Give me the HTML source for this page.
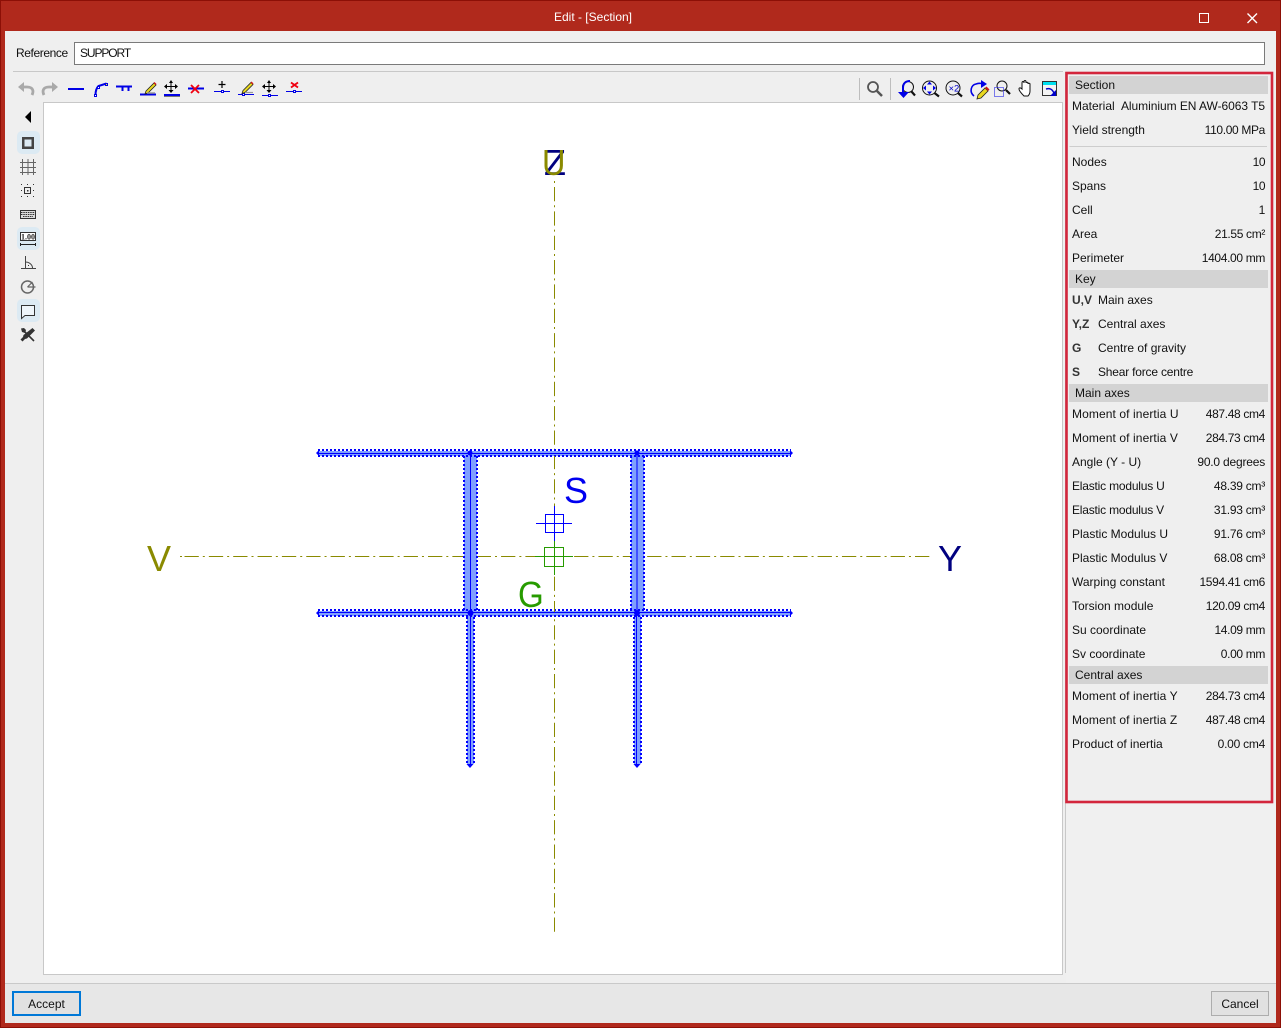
<!DOCTYPE html>
<html><head><meta charset="utf-8"><title>Edit - [Section]</title>
<style>
html,body{margin:0;padding:0;width:1281px;height:1028px;overflow:hidden;background:#b0291c}
body{position:relative;font:12px "Liberation Sans",sans-serif;color:#111}
.a{position:absolute}
.t{position:absolute;white-space:nowrap;line-height:16px;height:16px}
.r{position:absolute;white-space:nowrap;line-height:16px;height:16px;right:16px;text-align:right;letter-spacing:-.35px}
.h{position:absolute;left:1069px;width:199px;height:18px;margin-top:-1px;background:#d3d3d3;line-height:18px;text-indent:6px}
.btn{position:absolute;box-sizing:border-box;text-align:center;background:#e1e1e1}
svg{position:absolute;left:0;top:0;overflow:visible}
</style></head><body>
<div class="a" style="left:0;top:0;width:1279px;height:1026px;border:1px solid #8c0f06"></div>
<div class="t" style="left:0;width:1186px;top:9px;text-align:center;color:#fff">Edit - [Section]</div>
<div class="a" style="left:5px;top:31px;width:1271px;height:992px;background:#efefef"></div>
<div class="a" style="left:1066px;top:803px;width:210px;height:180px;background:#f0f0f0"></div>
<div class="a" style="left:5px;top:983px;width:1271px;height:40px;background:#e7e7e7;border-top:1px solid #c9c9c9;box-sizing:border-box"></div>
<div class="t" style="left:16px;top:45px;letter-spacing:-.4px">Reference</div>
<div class="a" style="left:74px;top:42px;width:1191px;height:23px;box-sizing:border-box;background:#fff;border:1px solid #7a7a7a"></div>
<div class="t" style="left:80px;top:45px;letter-spacing:-1.1px">SUPPORT</div>
<div class="a" style="left:13px;top:71px;width:1050px;height:1px;background:#c8c8c8"></div>
<div class="a" style="left:43px;top:102px;width:1020px;height:873px;box-sizing:border-box;background:#fff;border:1px solid #c8c8c8"></div>
<div class="a" style="left:1065px;top:72px;width:1px;height:901px;background:#c8c8c8"></div>
<div class="a" style="left:16.500px;top:131px;width:23px;height:23px;border-radius:5px;background:#dceaf3"></div>
<div class="a" style="left:16.500px;top:227px;width:23px;height:23px;border-radius:5px;background:#dceaf3"></div>
<div class="a" style="left:16.500px;top:299px;width:23px;height:23px;border-radius:5px;background:#dceaf3"></div>

<svg width="1281" height="1028" viewBox="0 0 1281 1028">
<g fill="none" stroke="#fff" stroke-width="1.400"><rect x="1199.500" y="13.500" width="9" height="9" stroke-width="1"/><path d="M1247.500 13.500l9.500 9.500M1257 13.500l-9.500 9.500"/></g>

<!-- axes -->
<g fill="none" stroke="#8a8a00" stroke-width="1" stroke-dasharray="14.300 4 2 4.050">
<path d="M554.500 187V932"/><path d="M184.500 556.500H932"/>
</g>
<path d="M554.500 181v2M180 556.500h2" stroke="#8a8a00"/>

<!-- drawing -->
<g fill="#7f9fff">
<rect x="464" y="451" width="13" height="161"/><rect x="631" y="451" width="13" height="161"/>
<rect x="318" y="451" width="473" height="5"/><rect x="318" y="611" width="473" height="5"/>
<rect x="467" y="614" width="7" height="150"/><rect x="634" y="614" width="7" height="150"/>
</g>
<g fill="none" stroke="#0000ff" stroke-width="1">
<path d="M318 453.500H791M318 612.500H791M470.500 453V764M637 453V612M636.500 612V764"/>
</g>
<g fill="none" stroke="#0000ff" stroke-width="2" stroke-dasharray="2 2">
<path d="M318 450H791M318 456H791M318 610H791M318 616H791"/>
<path d="M464 456V610M477 456V610M631 456V610M644 456V610"/>
<path d="M467 617V764M474 617V764M634 617V764M641 617V764"/>
</g>
<g fill="#0000ff">
<path d="M316 453l3-3v6zM793 453l-3-3v6zM316 613l3-3v6zM793 613l-3-3v6z"/>
<path d="M470 768l-3.500-4h7zM637 768l-3.500-4h7z"/>
<circle cx="470" cy="453" r="2.500"/><circle cx="637" cy="453" r="2.500"/><circle cx="470.500" cy="613" r="3"/><circle cx="637" cy="613" r="3"/>
</g>
<path d="M554.500 456v5M554.500 607v5" stroke="#8a8a00"/>
<g fill="none" stroke="#0000ff" stroke-width="1"><rect x="545.500" y="514.500" width="18" height="18"/><path d="M536 523.500h36M554.500 506v35"/></g>
<g fill="none" stroke="#279b00" stroke-width="1"><rect x="544.500" y="547.500" width="19" height="19"/><path d="M535 556.500h38M554.500 541v34"/></g>
<g font-family="Liberation Sans" font-size="36">
<text x="564" y="503" fill="#0000f0">S</text>
<text transform="translate(518 607) scale(.92 1)" fill="#279b00">G</text>
<text x="147" y="571" fill="#8a8a00">V</text>
<text x="938" y="571" fill="#000080">Y</text>
<text x="544" y="175" fill="#000080">Z</text>
<text transform="translate(542 175) scale(.9 1)" fill="#8a8a00">U</text>
</g>

<!-- top toolbar -->
<g fill="none" stroke="#a9a9a9" stroke-width="2.800"><path d="M22 87h5c6 0 7 4 5 8"/><path d="M54 87h-5c-6 0-7 4-5 8"/></g>
<g fill="#a9a9a9"><path d="M18 87l6-5v10zM58 87l-6-5v10z"/></g>
<g fill="none" stroke="#0000e6">
<path d="M68 89h16" stroke-width="2"/>
<path d="M95.500 95c0-5 2-8 3-9l8-2.500" stroke-width="2"/>
<path d="M116 86.500h16" stroke-width="2"/><path d="M122.500 87v4M128.500 87v4" stroke-width="2"/>
<path d="M140 94.500h16" stroke-width="2"/>
<path d="M164 95h16" stroke-width="2"/>
<path d="M188 88.500h16" stroke-width="2"/>
<path d="M214 91.500h16M238 94.500h16M262 95.500h16M286 91.500h16" stroke-width="1"/>
</g>
<path d="M164 96.500h16" stroke="#777" stroke-width="1"/>
<g fill="#fff" stroke="#0000e6" stroke-width="1"><rect x="94.500" y="94.500" width="2" height="2"/><rect x="97.500" y="86.500" width="2" height="2"/><rect x="105.500" y="83.500" width="2" height="2" fill="#ff0"/><rect x="221.500" y="90.500" width="2" height="2"/><rect x="242.500" y="93.500" width="2" height="2"/><rect x="268.500" y="94.500" width="2" height="2"/><rect x="293.500" y="90.500" width="2" height="2"/></g>
<path d="M146 91l8-8 2 2-8 8-3 1z" fill="#e8d820" stroke="#222" stroke-width=".8"/><path d="M153.500 83l1-1 2 2-1 1z" fill="#d01818"/><path d="M147 93h8" stroke="#999" stroke-width="1.500"/>
<path d="M243 90.500l8-8 2 2-8 8-3 1z" fill="#e8d820" stroke="#222" stroke-width=".8"/><path d="M250.500 82.500l1-1 2 2-1 1z" fill="#d01818"/><path d="M245 92.500h8" stroke="#999" stroke-width="1.200"/>
<g fill="none" stroke="#000" stroke-width="1"><path d="M171 83v8M166 86.500h10M269 83v8M264 86.500h10"/></g>
<g fill="#000"><path d="M171 80l-2 3h4zM171 93l-2.500-3h5zM164 86.500l3-2.500v5zM178 86.500l-3-2.500v5zM269 80l-2 3h4zM269 93l-2.500-3h5zM262 86.500l3-2.500v5zM276 86.500l-3-2.500v5z"/></g>
<path d="M191 85l8 8M199 85l-8 8M291 82.500l7 5M298 82.500l-7 5" stroke="#f00010" stroke-width="1.800" fill="none"/>
<path d="M222 81v7M218.500 84.500h7" stroke="#000" stroke-width="1.200"/>

<!-- right toolbar -->
<path d="M859.500 78v22M890.500 78v22" stroke="#bdbdbd"/>
<g fill="none" stroke="#555"><circle cx="873" cy="87" r="5" stroke-width="1.800"/><path d="M877 91l5 5" stroke-width="2.500"/></g>
<g fill="none" stroke="#111"><circle cx="908" cy="87" r="5.500" stroke-width="1"/><path d="M911.500 91.500l3.500 4" stroke-width="2.200"/>
<circle cx="929.500" cy="88" r="7" stroke-width="1"/><path d="M934.500 93l4.500 3.500" stroke-width="2.200"/>
<circle cx="953" cy="88" r="7" stroke-width="1"/><path d="M958 93l4 3.500" stroke-width="2.200"/>
<circle cx="1002" cy="86" r="5" stroke-width="1"/><path d="M1006 90l4 4" stroke-width="2.200"/></g>
<path d="M903 95V88c0-5 3-7 7-7" fill="none" stroke="#0000e6" stroke-width="2"/><path d="M898 92h11l-5.500 6z" fill="#0000e6"/>
<g fill="#0000e6"><path d="M929.500 81.500l-2.500 3h5zM929.500 94.500l-2.500-3h5zM923 88l3-2.500v5zM936 88l-3-2.500v5z"/></g>
<text x="948.500" y="91.500" font-family="Liberation Sans" font-size="9.500" fill="#0000c8">×2</text>
<path d="M974 96c-5-4-3-11 2-12 3-1 5-1 7 0" fill="none" stroke="#0000e6" stroke-width="1.600"/><path d="M981 80l6 4-6 4z" fill="#0000e6"/>
<path d="M978 95l7-7 3 3-7 7-4 1z" fill="#e8d820" stroke="#222" stroke-width=".8"/><path d="M985 88l1.500-1.500 3 3L988 91z" fill="#d01818"/>
<rect x="994.500" y="87.500" width="9" height="9" fill="none" stroke="#0000e6" stroke-dasharray="1 1"/>
<path d="M1024 96c-2-2-5-5-5-7s2-1 3 0v-6c0-2 2-2 2 0v-1c0-2 2-2 2 0v1c0-1 2-1 2 0v1c0-1 2-1 2 0v7c0 2-1 4-2 5z" fill="#fff" stroke="#111" stroke-width="1"/>
<rect x="1042.500" y="81.500" width="14" height="14" fill="#f4f4f4" stroke="#333"/><rect x="1043" y="82" width="13" height="3" fill="#00e0f0"/>
<path d="M1046 89c4-1 6 0 8 4" fill="none" stroke="#0000c8" stroke-width="1.500"/><path d="M1056 90v6h-6z" fill="#0000c8"/>

<!-- left toolbar -->
<path d="M25 117l6-6v12z" fill="#000"/>
<rect x="23.250" y="138.250" width="9.500" height="9.500" fill="none" stroke="#444" stroke-width="2.500"/>
<g fill="none" stroke="#666"><path d="M22.500 159v16M28 159v16M33.500 159v16M20 162.500h16M20 167.500h16M20 172.500h16"/></g>
<g fill="#333"><rect x="24.500" y="187.500" width="6" height="6" fill="none" stroke="#333"/><rect x="27" y="190" width="1.500" height="1.500"/><rect x="21" y="184" width="1" height="1"/><rect x="27" y="184" width="1" height="1"/><rect x="33" y="184" width="1" height="1"/><rect x="21" y="190" width="1" height="1"/><rect x="33" y="190" width="1" height="1"/><rect x="21" y="196" width="1" height="1"/><rect x="27" y="196" width="1" height="1"/><rect x="33" y="196" width="1" height="1"/></g>
<rect x="20.500" y="210.500" width="15" height="8" fill="#ddd" stroke="#333"/><path d="M21 212.500h14M21 214.500h14M23 216.500h10" stroke="#333" stroke-dasharray="1.500 .8"/>
<rect x="20.500" y="232.500" width="15" height="8" fill="#fff" stroke="#333"/><text x="28" y="239.500" text-anchor="middle" font-family="Liberation Serif" font-size="8" font-weight="bold" fill="#222">1.00</text>
<path d="M20.500 243v3M35.500 243v3M21 244.500h14" stroke="#222" fill="none"/>
<path d="M21 268.500h15M25.500 256v12M25.500 262c4 0 7 3 7 6" stroke="#444" fill="none"/><rect x="28" y="265" width="1" height="1" fill="#333"/>
<g fill="none" stroke="#666"><circle cx="27.500" cy="287" r="6" stroke-width="1.500"/><path d="M27.500 287h8M27.500 287l5-5" stroke-width="1.200"/></g>
<path d="M21.500 305.500h13v10H25l-3.500 3z" fill="#eef5fa" stroke="#333"/>
<g stroke="#333" stroke-width="1.600" fill="none"><path d="M22 329l12 12"/></g><path d="M32.500 328l2.500 2.500-8 8-2 .5-2.500 2.500-2-2 2.500-2.500.5-2z" fill="#333"/><path d="M21 328.500l3-.5 2 2-1 3-3-1z" fill="#333"/>

<!-- highlight -->
<rect x="1066.500" y="73" width="205.500" height="729" fill="none" stroke="#d3263c" stroke-width="2.600"/>
<path d="M1069.500 146.500H1267" stroke="#cdcdcd"/>
</svg>

<div class="a" style="left:0;top:1px;width:1281px;height:800px">
<div class="h" style="top:76px">Section</div>
<div class="t" style="left:1072px;top:97px">Material</div><div class="r" style="top:97px;letter-spacing:-.05px">Aluminium EN AW-6063 T5</div>
<div class="t" style="left:1072px;top:121px">Yield strength</div><div class="r" style="top:121px">110.00 MPa</div>
<div class="t" style="left:1072px;top:153px">Nodes</div><div class="r" style="top:153px;letter-spacing:-.5px">10</div>
<div class="t" style="left:1072px;top:177px">Spans</div><div class="r" style="top:177px;letter-spacing:-.5px">10</div>
<div class="t" style="left:1072px;top:201px">Cell</div><div class="r" style="top:201px">1</div>
<div class="t" style="left:1072px;top:225px">Area</div><div class="r" style="top:225px">21.55 cm²</div>
<div class="t" style="left:1072px;top:249px">Perimeter</div><div class="r" style="top:249px">1404.00 mm</div>
<div class="h" style="top:270px">Key</div>
<div class="t" style="left:1072px;top:291px;font-weight:bold;color:#333">U,V</div><div class="t" style="left:1098px;top:291px">Main axes</div>
<div class="t" style="left:1072px;top:315px;font-weight:bold;color:#333">Y,Z</div><div class="t" style="left:1098px;top:315px">Central axes</div>
<div class="t" style="left:1072px;top:339px;font-weight:bold;color:#333">G</div><div class="t" style="left:1098px;top:339px">Centre of gravity</div>
<div class="t" style="left:1072px;top:363px;font-weight:bold;color:#333">S</div><div class="t" style="left:1098px;top:363px;letter-spacing:-.2px">Shear force centre</div>
<div class="h" style="top:384px">Main axes</div>
<div class="t" style="left:1072px;top:405px;letter-spacing:.1px">Moment of inertia U</div><div class="r" style="top:405px">487.48 cm4</div>
<div class="t" style="left:1072px;top:429px;letter-spacing:.1px">Moment of inertia V</div><div class="r" style="top:429px">284.73 cm4</div>
<div class="t" style="left:1072px;top:453px">Angle (Y - U)</div><div class="r" style="top:453px;letter-spacing:-.2px">90.0 degrees</div>
<div class="t" style="left:1072px;top:477px;letter-spacing:-.2px">Elastic modulus U</div><div class="r" style="top:477px;letter-spacing:-.25px">48.39 cm³</div>
<div class="t" style="left:1072px;top:501px;letter-spacing:-.2px">Elastic modulus V</div><div class="r" style="top:501px;letter-spacing:-.25px">31.93 cm³</div>
<div class="t" style="left:1072px;top:525px">Plastic Modulus U</div><div class="r" style="top:525px;letter-spacing:-.25px">91.76 cm³</div>
<div class="t" style="left:1072px;top:549px">Plastic Modulus V</div><div class="r" style="top:549px;letter-spacing:-.25px">68.08 cm³</div>
<div class="t" style="left:1072px;top:573px">Warping constant</div><div class="r" style="top:573px">1594.41 cm6</div>
<div class="t" style="left:1072px;top:597px">Torsion module</div><div class="r" style="top:597px">120.09 cm4</div>
<div class="t" style="left:1072px;top:621px">Su coordinate</div><div class="r" style="top:621px">14.09 mm</div>
<div class="t" style="left:1072px;top:645px">Sv coordinate</div><div class="r" style="top:645px">0.00 mm</div>
<div class="h" style="top:666px">Central axes</div>
<div class="t" style="left:1072px;top:687px;letter-spacing:.1px">Moment of inertia Y</div><div class="r" style="top:687px">284.73 cm4</div>
<div class="t" style="left:1072px;top:711px;letter-spacing:.1px">Moment of inertia Z</div><div class="r" style="top:711px">487.48 cm4</div>
<div class="t" style="left:1072px;top:735px">Product of inertia</div><div class="r" style="top:735px;letter-spacing:-.25px">0.00 cm4</div>
</div>

<div class="btn" style="left:12px;top:991px;width:69px;height:25px;border:2px solid #0078d7;line-height:22px">Accept</div>
<div class="btn" style="left:1211px;top:991px;width:58px;height:25px;border:1px solid #adadad;line-height:24px">Cancel</div>
</body></html>
